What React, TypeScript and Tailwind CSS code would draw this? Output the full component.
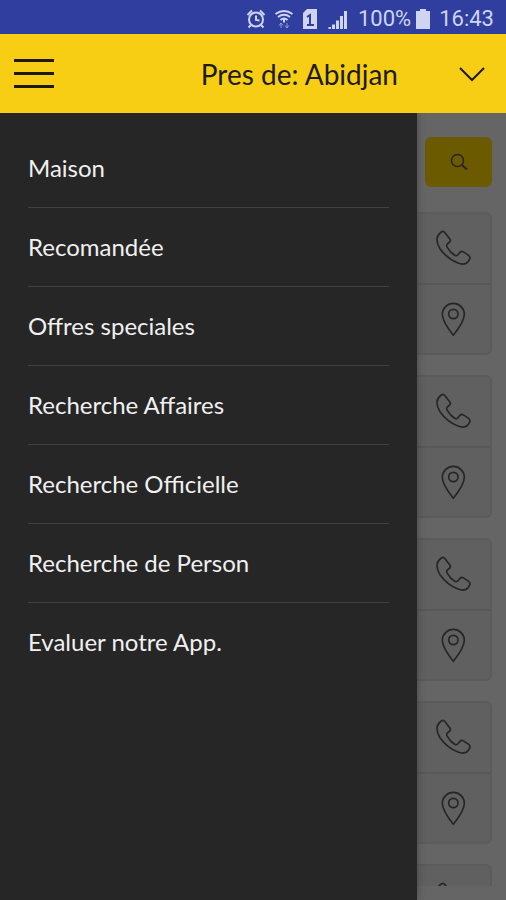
const menuItems = [
  'Maison',
  'Recomandée',
  'Offres speciales',
  'Recherche Affaires',
  'Recherche Officielle',
  'Recherche de Person',
  'Evaluer notre App.',
]

const listings = [1, 2, 3, 4, 5]

function PhoneIcon() {
  return (
    <svg className="w-9 h-9" viewBox="107 73 108 108" fill="none" stroke="currentColor" strokeWidth={5} strokeLinejoin="round">
      <path d="M123 79Q129 75 134 81L149 101Q152 105 148 109L141 115Q137 119 141 125Q150 141 163 149Q168 152 172 148L179 140Q183 136 188 138L205 149Q211 154 208 160Q204 171 195 174Q185 177 173 172Q140 159 119 129Q109 114 110 99Q112 86 123 79Z" />
    </svg>
  )
}

function PinIcon() {
  return (
    <svg className="w-9 h-9" viewBox="108 286 108 108" fill="none" stroke="currentColor" strokeWidth={5} strokeLinejoin="round">
      <path d="M160 389Q127 348 127 326A33 33 0 0 1 193 326Q193 348 160 389Z" />
      <circle cx="160" cy="325" r="14" />
    </svg>
  )
}

function StatusBar() {
  return (
    <div className="flex h-[34px] shrink-0 items-center justify-end bg-[#303f9f] pr-3 pt-1 text-[#cfd4f0]">
      <svg className="mr-2 h-5 w-5" viewBox="0 0 40 40" fill="none" stroke="currentColor" strokeWidth={4}>
        <circle cx="20" cy="21" r="14" />
        <path d="M20 13v9l7 1M3 12l9-9M37 12l-9-9M10 32l-5 5M30 32l5 5" />
      </svg>
      <svg className="mr-2 h-5 w-5" viewBox="0 0 40 40" fill="none" stroke="currentColor" strokeWidth={4}>
        <path d="M3 10Q20-2 37 10M8 16Q20 7 32 16M13 22Q20 16 27 22M20 21v6" />
        <path d="M14 38v-9M10 33l4-5 4 5M26 28v9M22 33l4 5 4-5" strokeWidth={2} opacity={0.6} />
      </svg>
      <svg className="mr-2.5 h-5 w-4" viewBox="0 0 16 20">
        <path d="M5 0h10v20H1V4z" fill="currentColor" />
        <path d="M5 8L8 6v10M5 16h7" fill="none" stroke="#303f9f" strokeWidth={2} />
      </svg>
      <svg className="mr-2.5 h-5 w-5" viewBox="0 0 40 40" fill="currentColor">
        <path d="M1 36h5v4H1zM8 31h6v9H8zM16 23h6v17h-6zM24 14h6v26h-6zM32 4h6v36h-6z" />
      </svg>
      <span className="font-[Roboto,sans-serif] text-[22px] leading-7">100%</span>
      <svg className="ml-1 mr-2 h-5 w-4" viewBox="0 0 16 20" fill="currentColor">
        <path d="M5 0h6v2h4v18H1V2h4z" />
      </svg>
      <span className="font-[Roboto,sans-serif] text-[22px] leading-7">16:43</span>
    </div>
  )
}

function Header() {
  return (
    <header className="z-20 flex h-[79px] shrink-0 items-center bg-[#f7ce13] pl-3.5 pr-5 text-[#1c1b12]">
      <button type="button" aria-label="Menu" className="flex w-10 flex-col gap-2.5 cursor-pointer">
        <span className="h-[3px] bg-current" />
        <span className="h-[3px] bg-current" />
        <span className="h-[3px] bg-current" />
      </button>
      <button type="button" className="ml-auto flex items-center cursor-pointer">
        <span className="mr-[60px] text-[28px] leading-8">Pres de: Abidjan</span>
        <svg className="h-4 w-7" viewBox="0 0 28 16" fill="none" stroke="currentColor" strokeWidth={2}>
          <path d="M2 2l12 12 12-12" />
        </svg>
      </button>
    </header>
  )
}

function Drawer() {
  return (
    <nav className="z-10 flex-1 bg-[#262626] px-7 pt-4 shadow-[0_0_8px_rgba(0,0,0,0.3)]">
      <ul className="divide-y divide-[#414141]">
        {menuItems.map((item) => (
          <li key={item}>
            <a href="#" className="flex h-[78px] items-center text-2xl text-[#f0f0f0]">
              {item}
            </a>
          </li>
        ))}
      </ul>
    </nav>
  )
}

function ListingActions() {
  return (
    <div className="flex h-[143px] shrink-0 flex-col divide-y-2 divide-[#585858] rounded-r-md border-2 border-l-0 border-[#5b5b5b] bg-[#606060]">
      <button type="button" aria-label="Appeler" className="flex flex-1 items-center justify-center cursor-pointer">
        <PhoneIcon />
      </button>
      <button type="button" aria-label="Carte" className="flex flex-1 items-center justify-center cursor-pointer">
        <PinIcon />
      </button>
    </div>
  )
}

export default function App() {
  return (
    <div className="flex h-screen flex-col overflow-hidden font-[Lato,sans-serif]">
      <StatusBar />
      <Header />
      <div className="flex min-h-0 flex-1">
        <Drawer />
        <main className="flex w-[89px] flex-col bg-[#656565] pb-3.5 pr-3.5 pt-6 text-[#262626]">
          <button
            type="button"
            aria-label="Rechercher"
            className="mb-[25px] ml-2 flex h-[50px] shrink-0 items-center justify-center rounded-md bg-[#6c5a00] cursor-pointer"
          >
            <svg className="h-5 w-5" viewBox="0 0 40 40" fill="none" stroke="currentColor" strokeWidth={3}>
              <circle cx="17" cy="17" r="12" />
              <path d="M26 26l10 9" strokeWidth={4} />
            </svg>
          </button>
          <div className="flex min-h-0 flex-1 flex-col gap-5 overflow-hidden">
            {listings.map((id) => (
              <ListingActions key={id} />
            ))}
          </div>
        </main>
      </div>
    </div>
  )
}
